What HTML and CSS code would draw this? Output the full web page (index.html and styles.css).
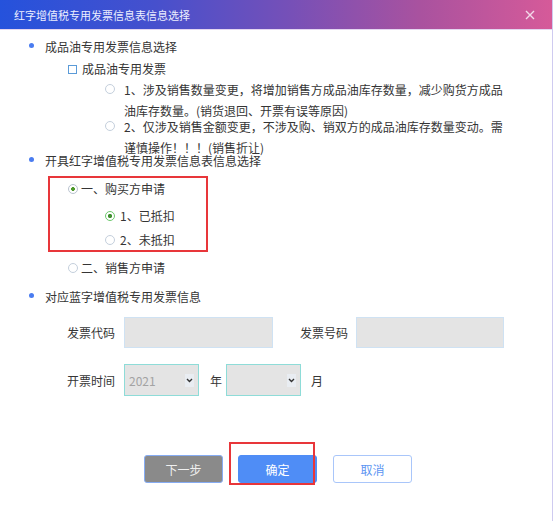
FILE: index.html
```html
<!DOCTYPE html>
<html lang="zh-CN">
<head>
  <meta charset="UTF-8">
  <meta name="viewport" content="width=device-width, initial-scale=1.0">
  <title>红字增值税专用发票信息表信息选择</title>
  <link rel="stylesheet" href="styles.css">
</head>
<body>

  <div class="dialog">

    <div class="titlebar">
      <span class="title">红字增值税专用发票信息表信息选择</span>
      <svg class="close" width="10" height="10" viewBox="0 0 10 10">
        <path d="M1 1 L9 9 M9 1 L1 9" stroke="#f3d9ea" stroke-width="1.4" fill="none"/>
      </svg>
    </div>

    <div class="content">

      <div class="heading">成品油专用发票信息选择</div>
      <div class="check-row"><span class="checkbox"></span>成品油专用发票</div>

      <div class="options">
        <div class="option">
          <span class="radio"></span>
          <span class="option-text">1、涉及销售数量变更，将增加销售方成品油库存数量，减少购货方成品油库存数量。(销货退回、开票有误等原因)</span>
        </div>
        <div class="option">
          <span class="radio"></span>
          <span class="option-text">2、仅涉及销售金额变更，不涉及购、销双方的成品油库存数量变动。需谨慎操作！！！(销售折让)</span>
        </div>
      </div>

      <div class="heading heading-2">开具红字增值税专用发票信息表信息选择</div>

      <div class="apply-box">
        <div class="apply-row"><span class="radio radio-dot"></span>一、购买方申请</div>
        <div class="sub-row sub-first"><span class="radio radio-on"></span>1、已抵扣</div>
        <div class="sub-row"><span class="radio"></span>2、未抵扣</div>
      </div>
      <div class="apply-row seller-row"><span class="radio"></span>二、销售方申请</div>

      <div class="heading heading-3">对应蓝字增值税专用发票信息</div>

      <div class="field-row">
        <span class="label">发票代码</span>
        <input class="field" type="text" disabled>
        <span class="label label-second">发票号码</span>
        <input class="field field-second" type="text" disabled>
      </div>

      <div class="field-row date-row">
        <span class="label">开票时间</span>
        <div class="select">
          <span class="select-value">2021</span>
          <svg class="chevron" width="7" height="5" viewBox="0 0 7 5"><path d="M1 1 L3.5 3.5 L6 1" stroke="#333" stroke-width="1.4" fill="none"/></svg>
        </div>
        <span class="unit unit-year">年</span>
        <div class="select select-month">
          <span class="select-value"></span>
          <svg class="chevron" width="7" height="5" viewBox="0 0 7 5"><path d="M1 1 L3.5 3.5 L6 1" stroke="#333" stroke-width="1.4" fill="none"/></svg>
        </div>
        <span class="unit unit-month">月</span>
      </div>

      <div class="buttons">
        <button class="btn btn-next">下一步</button>
        <button class="btn btn-ok">确定</button>
        <button class="btn btn-cancel">取消</button>
      </div>

    </div>

    <div class="mark"></div>

  </div>

</body>
</html>
```

FILE: styles.css
```css
body {
  margin: 0;
  font-family: "Noto Sans CJK SC", "Noto Sans", sans-serif;
  font-size: 12px;
  color: #353535;
  background-color: #fff;
}

.dialog {
  position: relative;
  width: 552px;
  height: 521px;
  border-right: 1px solid #cfcbf0;
}

.titlebar {
  height: 29px;
  display: flex;
  align-items: center;
  justify-content: space-between;
  padding: 0 17px 0 14px;
  border-bottom: 1px solid #e4d6f0;
  background: linear-gradient(90deg, #2552dc 0%, #4650cd 28%, #7550b8 52%, #a9529f 76%, #d65a99 100%);
  color: #eceeff;
  font-size: 11px;
}

.content {
  padding-top: 7px;
}

/* section headings with blue dot */
.heading {
  display: flex;
  align-items: center;
  line-height: 20px;
  padding-left: 29px;
}

.heading::before {
  content: "";
  width: 5px;
  height: 5px;
  border-radius: 50%;
  background-color: #4a7cf0;
  margin: -4px 11px 0 0;
}

.heading-2 {
  margin-top: -7px;
}

.heading-3 {
  margin-top: 9px;
}

.check-row {
  display: flex;
  align-items: center;
  line-height: 20px;
  margin-top: 2px;
  padding-left: 68px;
}

.checkbox {
  width: 7px;
  height: 7px;
  border: 1.5px solid #5b9bd8;
  margin-right: 5px;
}

.options {
  padding-left: 105px;
}

.option {
  display: flex;
  line-height: 21px;
}

.option + .option {
  margin-top: -5px;
}

.option-text {
  width: 385px;
}

.radio {
  flex: none;
  box-sizing: border-box;
  width: 10px;
  height: 10px;
  border: 1px solid #c4cfdc;
  border-radius: 50%;
  background-color: #fff;
}

.option .radio {
  margin: 5px 9px 0 0;
}

.radio-dot {
  background: radial-gradient(circle, #4e9a2c 0 1.6px, #fff 2.2px);
  border-color: #b9c3cf;
}

.radio-on {
  border: 1.5px solid #6cc86c;
  background: radial-gradient(circle, #3f8f2f 0 1.8px, #fff 2.4px);
}

/* red frame around buyer choices */
.apply-box {
  box-sizing: border-box;
  width: 160px;
  margin: 5px 0 0 48px;
  padding-top: 1px;
  border: 2px solid #e8363a;
}

.apply-row {
  display: flex;
  align-items: center;
  line-height: 20px;
  padding-left: 18px;
}

.apply-row .radio {
  margin-right: 3px;
}

.sub-row {
  display: flex;
  align-items: center;
  line-height: 20px;
  margin-top: 4px;
  padding-left: 55px;
}

.sub-first {
  margin-top: 7px;
}

.sub-row .radio {
  margin-right: 5px;
}

.seller-row {
  margin-top: 6px;
  padding-left: 68px;
}

.field-row {
  display: flex;
  align-items: center;
  margin-top: 10px;
  padding-left: 67px;
}

.date-row {
  margin-top: 16px;
}

.label {
  width: 48px;
  margin-right: 9px;
}

.label-second {
  margin-left: 27px;
  margin-right: 8px;
}

.field {
  box-sizing: border-box;
  width: 149px;
  height: 31px;
  margin: 0;
  border: 1px solid #cfe2f3;
  background-color: #e4e4e4;
}

.field-second {
  width: 148px;
}

.select {
  box-sizing: border-box;
  width: 75px;
  height: 32px;
  display: flex;
  align-items: center;
  justify-content: space-between;
  padding: 0 4px 0 4px;
  border: 1.5px solid #8edcd8;
  background-color: #e4e4e4;
}

.select-value {
  color: #a3a3a3;
  font-size: 12px;
}

.chevron {
  padding: 4px 1px;
  background-color: #e9edf2;
}

.unit-year {
  margin: 0 4px 0 11px;
}

.unit-month {
  margin-left: 10px;
}

.buttons {
  display: flex;
  gap: 15px;
  margin-top: 59px;
  padding-left: 144px;
}

.btn {
  box-sizing: border-box;
  width: 79px;
  height: 28px;
  border-radius: 3px;
  font-family: inherit;
  font-size: 12px;
  cursor: pointer;
}

.btn-next {
  background-color: #8a8a8a;
  border: 1px solid #86acf3;
  color: #f0f0f0;
}

.btn-ok {
  background-color: #4f8df6;
  border: 1px solid #4f8df6;
  color: #fff;
}

.btn-cancel {
  margin-left: 1px;
  background-color: #fff;
  border: 1px solid #a9c6fa;
  color: #5c95f2;
}

/* red annotation frame over the OK button */
.mark {
  position: absolute;
  left: 229px;
  top: 442px;
  width: 82px;
  height: 39px;
  border: 2px solid #e8363a;
}
```
